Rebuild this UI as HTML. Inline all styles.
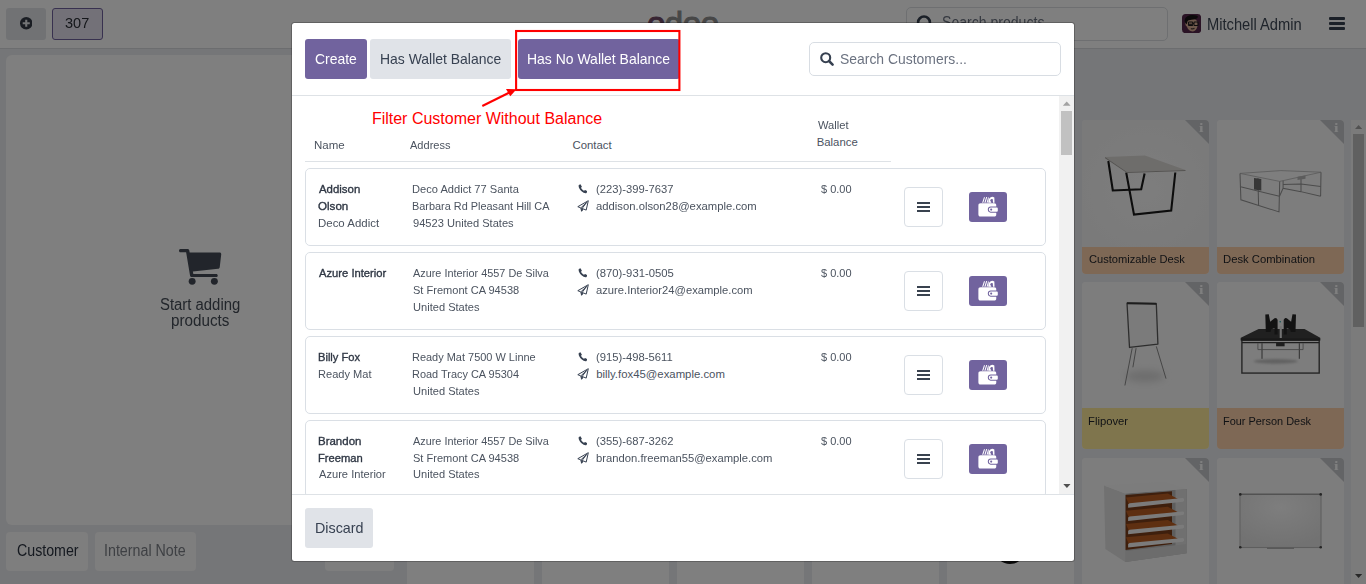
<!DOCTYPE html>
<html lang="en">
<head>
<meta charset="utf-8">
<title>Point of Sale - Customers</title>
<style>
*{box-sizing:border-box;margin:0;padding:0}
html,body{width:1366px;height:584px;overflow:hidden}
body{font-family:"Liberation Sans",Arial,sans-serif;font-size:14px;color:#374151;background:#f3f4f6;position:relative}
.abs{position:absolute}
.t{position:absolute;white-space:nowrap;line-height:1;transform-origin:0 0}
#app{position:absolute;left:0;top:0;width:1366px;height:584px;background:#ebedf0;overflow:hidden}
#hdr{position:absolute;left:0;top:0;width:1366px;height:49px;background:#fff;border-bottom:1px solid #d9dbdf}
.hbtn{position:absolute;top:8px;height:32px;border-radius:3px;background:#e3e5e9}
#leftpane{position:absolute;left:6px;top:55px;width:388px;height:470px;background:#fefefe;border-radius:6px}
.lbtn{position:absolute;top:532px;height:39px;border-radius:4px;background:#fcfcfc}
.card{position:absolute;width:127px;border-radius:4px;overflow:hidden;background:#fff}
.card .lbl{position:absolute;left:0;top:127px;width:127px}
.tri{position:absolute;right:0;top:0;width:0;height:0;border-top:24.500px solid #c6c8cc;border-left:24.500px solid transparent}
#ovl{position:absolute;left:0;top:0;width:1366px;height:584px;background:rgba(0,0,0,.5)}
#modal{position:absolute;left:292px;top:23px;width:782px;height:538px;background:#fff;border-radius:2.500px;overflow:hidden;box-shadow:0 0 0 1px rgba(0,0,0,.23)}
.btn{position:absolute;border-radius:3px;height:40px;top:16px}
.pri{background:#71639e;color:#fff}
.sec{background:#e0e3e8;color:#374151}
.row{position:absolute;left:13px;width:741px;height:78px;border:1px solid #dadfe5;border-radius:5px;background:#fff;color:#414a57}
.kebab{position:absolute;left:598px;top:18px;width:39px;height:40px;border:1px solid #dadfe5;border-radius:4px;background:#fff}
.kebab span{position:absolute;left:12px;width:13px;height:2px;background:#39424f}
.wbtn{position:absolute;left:663px;top:23px;width:38px;height:30px;border-radius:3px;background:#71639e}
</style>
</head>
<body>
<div id="app"><div id="hdr"><div class="hbtn" style="left:6px;width:40px"></div><div class="hbtn" style="left:52px;width:51px;background:#e6e2f0;border:1px solid #71639e"></div><span class="t" style="left:65.33px;top:15px;font-size:15.4px;transform:scaleX(0.943);color:#2b2f36">307</span><svg class="abs" style="left:19.700px;top:17px" width="12.500" height="12.500" viewBox="0 0 12 12"><circle cx="6" cy="6" r="6" fill="#343b47"/><path d="M6 2.600v6.800M2.600 6h6.800" stroke="#e7e9ed" stroke-width="2"/></svg><span class="t" style="left:646.900px;top:7.100px;font-size:33px;letter-spacing:-.4px;color:#8f8f8f;-webkit-text-stroke:1px #8f8f8f"><span style="color:#714b67;-webkit-text-stroke-color:#714b67">o</span>doo</span><div class="abs" style="left:906px;top:7px;width:262px;height:34px;border:1px solid #dcdfe3;border-radius:5px;background:#fff"></div><svg class="abs" style="left:915px;top:14px" width="20" height="20" viewBox="915 14 20 20"><circle cx="924" cy="22.400" r="5.900" fill="none" stroke="#374151" stroke-width="2.600"/><path d="M928.500 27L932.500 31" stroke="#374151" stroke-width="3" stroke-linecap="round"/></svg><span class="t" style="left:942.24px;top:15px;font-size:16px;transform:scaleX(0.879);color:#6b7280">Search products...</span><svg class="abs" style="left:1182px;top:13.800px" width="19.200" height="19.200" viewBox="0 0 19 19">
<rect width="19" height="19" rx="3.600" fill="#54264a"/>
<path d="M3.300 8.500C3.300 5.800 5.500 4.600 9 4.600S15.600 5.800 15.600 9.500C15.600 13.500 13.800 17.400 10.500 17.400 7.500 17.400 5.800 15.500 4.800 12.500 3.600 12.300 3.300 10.500 3.300 8.500z" fill="#dcb096"/>
<path d="M2.600 6.200C3.400 2.200 7 .8 10.500.9 13.500 1 15.800 1.700 15.900 2.800 15 5 12.500 5.700 9.500 5.800 7.600 5.900 6.300 6.300 5.500 7.200L4.700 10.200C3.300 9.500 2.400 7.800 2.600 6.200z" fill="#161214"/>
<g fill="none" stroke="#1d1a1c" stroke-width="1"><rect x="6.400" y="8" width="4.200" height="3.400" rx=".6"/><rect x="11.900" y="8" width="4" height="3.400" rx=".6"/><path d="M10.600 9.300H11.900"/></g>
<path d="M6.700 10.200H10.300" stroke="#2a2426" stroke-width="1.200"/>
<path d="M8.800 14.300Q10.500 15.200 12.400 14.200" stroke="#4a3a36" stroke-width="1.100" fill="none"/></svg><span class="t" style="left:1207.15px;top:17px;font-size:16px;transform:scaleX(0.918);color:#3f4957">Mitchell Admin</span><div class="abs" style="left:1329px;top:17px;width:16px;height:2.800px;background:#374151;border-radius:1px"></div><div class="abs" style="left:1329px;top:22px;width:16px;height:2.800px;background:#374151;border-radius:1px"></div><div class="abs" style="left:1329px;top:27px;width:16px;height:2.800px;background:#374151;border-radius:1px"></div></div><div id="leftpane"></div><svg class="abs" style="left:179px;top:248.500px" width="42.500" height="36" viewBox="0 0 43 37" preserveAspectRatio="none"><g fill="#444b56">
<path d="M1.500 0H8.600C9.600 0 10.200.6 10.400 1.500L10.800 3.700H41C42.200 3.700 42.900 4.600 42.700 5.700L41.200 18.700C41.100 19.600 40.400 20.200 39.500 20.300L14 23 14.500 25.600H37.500C38.600 25.600 39.200 26.300 39.200 27.200S38.600 28.900 37.500 28.900H13C12 28.900 11.400 28.300 11.200 27.400L7.200 3.300H1.500C.5 3.300 0 2.600 0 1.700S.5 0 1.500 0z"/>
<circle cx="13.300" cy="33.200" r="3.500"/><circle cx="35.800" cy="33.200" r="3.500"/></g></svg><span class="t" style="left:159.90px;top:297px;font-size:16px;transform:scaleX(0.930);color:#454c57">Start adding</span><span class="t" style="left:170.75px;top:313px;font-size:16px;transform:scaleX(0.951);color:#454c57">products</span><div class="lbtn" style="left:6px;width:82px"></div><div class="lbtn" style="left:95px;width:101px"></div><span class="t" style="left:16.73px;top:543px;font-size:16px;transform:scaleX(0.888);color:#2b3340">Customer</span><span class="t" style="left:104.46px;top:543px;font-size:16px;transform:scaleX(0.891);color:#7d8188">Internal Note</span><div class="abs" style="left:325px;top:531px;width:69px;height:40px;border-radius:4px;background:#fdfdfd"></div><div class="card" style="left:1082px;top:120px;height:154px"><svg class="abs" style="left:0;top:0" width="127" height="127" viewBox="0 0 127 127" preserveAspectRatio="none"><defs><radialGradient id="g1" cx=".5" cy=".55" r=".6"><stop offset="0" stop-color="#fbfbfb"/><stop offset="1" stop-color="#f4f4f4"/></radialGradient></defs>
<rect width="127" height="127" fill="url(#g1)"/>
<g fill="none" stroke="#1a1a1a" stroke-width="2.100" stroke-linejoin="miter">
<path d="M26.300 41L30.800 70.500 59.200 69.300 62.600 53.500"/>
<path d="M44.200 52.500L52 94.600 89.200 90.600 93.300 52.500"/></g>
<path d="M23.100 37.100L62.900 35.500 103.500 49.900 45 51.900z" fill="#dddad6"/>
<path d="M23.100 37.100L45 51.900 103.500 49.900 103.500 51.100 45 53.100 23.100 38.300z" fill="#a9a6a2"/></svg><div class="tri"></div><span class="t" style="left:117.40px;top:1px;font-size:13.5px;transform:scaleX(1.200);font-weight:bold;color:#fff;font-family:'Liberation Serif',serif">i</span><div class="lbl" style="top:127px;height:27px;background:#fdd0aa"></div><span class="t" style="left:6.51px;top:134px;font-size:11.375px;transform:scaleX(0.979);color:#1f2329">Customizable Desk</span></div><div class="card" style="left:1217px;top:120px;height:154px"><svg class="abs" style="left:0;top:0" width="127" height="127" viewBox="0 0 127 127" preserveAspectRatio="none"><rect width="127" height="127" fill="#fafafa"/>
<path d="M23 53.400L63.900 50.600 104 52.200 62.700 61.400z" fill="#fdfdfd" stroke="#b4b4b4" stroke-width=".8"/>
<g fill="none" stroke="#979797" stroke-width="1.050">
<path d="M23 53.400L23.900 79.800 62 91.900 62.700 61.400"/>
<path d="M23.500 66.700L62.500 76.300M40.900 58L41.600 85.500"/>
<path d="M104 52.200L103.600 76.300M84 57.500V71.700L103.600 76.300M66.100 60.700V68.300L84 71.700M62.500 76.300L66.100 68.300"/>
<path d="M84 64L103.800 66.500M66.100 64.500L84 64"/>
</g>
<path d="M37 58L44.300 59.100 44.300 70.600 37 69.400z" fill="#6e6e6e"/>
<path d="M80.500 56.800L88.500 55.600 88.500 58.800 80.500 60z" fill="#b8b8b8"/></svg><div class="tri"></div><span class="t" style="left:117.40px;top:1px;font-size:13.5px;transform:scaleX(1.200);font-weight:bold;color:#fff;font-family:'Liberation Serif',serif">i</span><div class="lbl" style="top:127px;height:27px;background:#fdd0aa"></div><span class="t" style="left:6.01px;top:134px;font-size:11.375px;transform:scaleX(0.992);color:#1f2329">Desk Combination</span></div><div class="card" style="left:1082px;top:282px;height:167px"><svg class="abs" style="left:0;top:0" width="127" height="126" viewBox="0 0 127 127" preserveAspectRatio="none"><defs><filter id="b3" x="-30%" y="-60%" width="160%" height="220%"><feGaussianBlur stdDeviation="3.500"/></filter></defs>
<rect width="127" height="127" fill="#fafafa"/>
<ellipse cx="63" cy="95" rx="19" ry="6" fill="#dcdcdc" filter="url(#b3)"/>
<g stroke="#8a8a8a" stroke-width="1" fill="none"><path d="M50.200 66.700L42.900 104.300M54.100 66.700L50.900 86M74.300 64.900L84 97.400"/></g>
<path d="M45 21.200L74.300 21.700 75.900 62.600 47.500 66z" fill="#f6f6f6" stroke="#5a5a5a" stroke-width="1.300" stroke-linejoin="round"/>
<path d="M45 21.500L74.300 22" stroke="#3a3a3a" stroke-width="2"/></svg><div class="tri"></div><span class="t" style="left:117.40px;top:1px;font-size:13.5px;transform:scaleX(1.200);font-weight:bold;color:#fff;font-family:'Liberation Serif',serif">i</span><div class="lbl" style="top:126px;height:41px;background:#ffeb9b"></div><span class="t" style="left:6.01px;top:134px;font-size:11.375px;transform:scaleX(0.991);color:#1f2329">Flipover</span></div><div class="card" style="left:1217px;top:282px;height:167px"><svg class="abs" style="left:0;top:0" width="127" height="126" viewBox="0 0 127 127" preserveAspectRatio="none"><defs><filter id="b4" x="-20%" y="-150%" width="140%" height="400%"><feGaussianBlur stdDeviation="1.300"/></filter></defs>
<rect width="127" height="127" fill="#fafafa"/>
<ellipse cx="58.700" cy="80" rx="22" ry="2.400" fill="#c4c4c4" filter="url(#b4)"/>
<g fill="none">
<rect x="24.900" y="58.500" width="77.300" height="33.300" stroke="#4a4a4a" stroke-width="1.400"/>
<path d="M24.900 61.100H102.200" stroke="#3c3c3c" stroke-width="1.300"/>
<path d="M45 61.700V77.400M82.300 61.700V77.400" stroke-width="1" stroke="#5a5a5a"/>
<path d="M40.900 61.700V68.100H86.100V61.700" stroke-width=".8" stroke="#858585"/>
</g>
<rect x="59.100" y="61.500" width="8.500" height="3.300" fill="#3a3a3a"/>
<path d="M23.800 56.200L41.600 47.300 87.500 47.300 103.200 56.200 103.200 58.900 23.800 58.900z" fill="#404040"/>
<path d="M23.800 56.600H103.200V58.900H23.800z" fill="#333"/>
<path d="M48.300 32.800L51.800 32.500 53.200 40 57.500 36.500 59.200 36.300 60.600 38V53H57.500V46.500L54.200 47.500 53.500 50.500H48.800z" fill="#262626"/>
<path d="M79 32.800L75.500 32.500 74.100 40 69.800 36.500 68.100 36.300 66.700 38V53H69.800V46.500L73.100 47.500 73.800 50.500H78.500z" fill="#262626"/>
<path d="M62.700 44.500H64.800V56.400H62.700z" fill="#e6e6e6"/>
<circle cx="63.200" cy="40" r=".8" fill="#2aa"/></svg><div class="tri"></div><span class="t" style="left:117.40px;top:1px;font-size:13.5px;transform:scaleX(1.200);font-weight:bold;color:#fff;font-family:'Liberation Serif',serif">i</span><div class="lbl" style="top:126px;height:41px;background:#fdd0aa"></div><span class="t" style="left:6.04px;top:134px;font-size:11.375px;transform:scaleX(0.962);color:#1f2329">Four Person Desk</span></div><div class="card" style="left:407px;top:458px;height:167px"></div><div class="card" style="left:542px;top:458px;height:167px"></div><div class="card" style="left:677px;top:458px;height:167px"></div><div class="card" style="left:812px;top:458px;height:167px"></div><div class="card" style="left:947px;top:458px;height:167px"></div><div class="abs" style="left:996px;top:540px;width:28px;height:23.500px;border-radius:50%;background:#111"></div><div class="card" style="left:1082px;top:458px;height:167px"><svg class="abs" style="left:0;top:0" width="127" height="127" viewBox="0 0 127 127" preserveAspectRatio="none"><rect width="127" height="127" fill="#fafafa"/><path d="M43.300 35.600L104.600 31 104.600 95.300 43.300 104z" fill="#bdbdbd"/><path d="M43.300 37L90 33.300 90 86 43.300 92z" fill="#7d3f1a"/><path d="M93.500 32L104.600 31 104.600 95.300 93.500 93z" fill="#e0e0e0"/><path d="M44.0 39.4 85.8 35.5 96.0 40.9 46.8 46.1 z" fill="#bd5e22"/><path d="M46.1 46.2 47.6 45.2 100.8 40.1 102.0 40.8 102.0 42.9 100.8 43.8 46.1 49.7 z" fill="#f7f7f7"/><path d="M44.0 52.7 85.8 48.8 96.0 54.2 46.8 59.4 z" fill="#bd5e22"/><path d="M46.1 59.5 47.6 58.5 100.8 53.4 102.0 54.1 102.0 56.2 100.8 57.1 46.1 63.0 z" fill="#f7f7f7"/><path d="M44.0 66.0 85.8 62.1 96.0 67.5 46.8 72.7 z" fill="#bd5e22"/><path d="M46.1 72.8 47.6 71.8 100.8 66.7 102.0 67.4 102.0 69.5 100.8 70.4 46.1 76.3 z" fill="#f7f7f7"/><path d="M44.0 79.3 85.8 75.4 96.0 80.8 46.8 86.0 z" fill="#bd5e22"/><path d="M46.1 86.1 47.6 85.1 100.8 80.0 102.0 80.7 102.0 82.8 100.8 83.7 46.1 89.6 z" fill="#f7f7f7"/><path d="M43.300 93L104.600 86 104.600 95.300 43.300 104z" fill="#d9d9d9"/><path d="M22 27.600L43.300 35.600 43.300 104 23.400 91.100z" fill="#e2e2e2"/><path d="M22 27.600L82.400 24.100 104.600 31 43.300 35.600z" fill="#f8f8f8"/></svg><div class="tri"></div><span class="t" style="left:117.40px;top:1px;font-size:13.5px;transform:scaleX(1.200);font-weight:bold;color:#fff;font-family:'Liberation Serif',serif">i</span><div class="lbl" style="top:127px;height:40px;background:#fdd0aa"></div></div><div class="card" style="left:1217px;top:458px;height:167px"><svg class="abs" style="left:0;top:0" width="127" height="127" viewBox="0 0 127 127" preserveAspectRatio="none"><defs><radialGradient id="g7" cx=".5" cy=".25" r=".75"><stop offset="0" stop-color="#fcfcfc"/><stop offset="1" stop-color="#e4e4e4"/></radialGradient></defs>
<rect width="127" height="127" fill="#fafafa"/>
<rect x="23" y="36.100" width="81" height="53.400" fill="url(#g7)" stroke="#bdbdbd" stroke-width="1.100"/>
<path d="M23 36.300H104" stroke="#a5a5a5" stroke-width="1.300"/>
<path d="M50 90.300H77" stroke="#a0a0a0" stroke-width="1"/>
<g fill="#4a4a4a"><circle cx="23.300" cy="36.400" r="1.300"/><circle cx="103.700" cy="36.400" r="1.300"/><circle cx="23.300" cy="89.300" r="1.300"/><circle cx="103.700" cy="89.300" r="1.300"/></g></svg><div class="tri"></div><span class="t" style="left:117.40px;top:1px;font-size:13.5px;transform:scaleX(1.200);font-weight:bold;color:#fff;font-family:'Liberation Serif',serif">i</span><div class="lbl" style="top:127px;height:40px;background:#fdd0aa"></div></div><div class="abs" style="left:1351px;top:119.500px;width:15px;height:465px;background:#f7f7f7"></div><div class="abs" style="left:1353px;top:134.300px;width:11px;height:193px;background:#c1c1c1"></div><svg class="abs" style="left:1351px;top:119px" width="15" height="465" viewBox="0 0 15 465"><path d="M4 10L7.600 6 11.200 10z" fill="#a3a3a3"/><path d="M4 455L7.600 459 11.200 455z" fill="#505050"/></svg></div>
<div id="ovl"></div>
<div id="modal"><div class="btn pri" style="left:13px;width:62px"></div><div class="btn sec" style="left:78px;width:141px"></div><div class="btn pri" style="left:226px;width:162px"></div><span class="t" style="left:23.00px;top:28px;font-size:15px;transform:scaleX(0.929);color:#fff">Create</span><span class="t" style="left:87.64px;top:28px;font-size:15px;transform:scaleX(0.930);color:#374151">Has Wallet Balance</span><span class="t" style="left:235.24px;top:28px;font-size:15px;transform:scaleX(0.931);color:#fff">Has No Wallet Balance</span><div class="abs" style="left:517px;top:19px;width:252px;height:34px;border:1px solid #d8dde3;border-radius:5px;background:#fff"></div><svg class="abs" style="left:527.500px;top:29.400px" width="14" height="14" viewBox="0 0 14 14"><circle cx="5.700" cy="5.700" r="4.500" fill="none" stroke="#374151" stroke-width="2.100"/><path d="M9 9L12.600 12.600" stroke="#374151" stroke-width="2.500" stroke-linecap="round"/></svg><span class="t" style="left:548.20px;top:28px;font-size:15px;transform:scaleX(0.928);color:#6b7280">Search Customers...</span><div class="abs" style="left:0;top:72px;width:782px;height:1px;background:#dee2e6"></div><div class="abs" style="left:0;top:73px;width:782px;height:398px;overflow:hidden"><span class="t" style="left:21.89px;top:44px;font-size:11.375px;transform:scaleX(1.012);color:#4b535f">Name</span><span class="t" style="left:118.00px;top:44px;font-size:11.375px;transform:scaleX(0.972);color:#4b535f">Address</span><span class="t" style="left:280.50px;top:44px;font-size:11.375px;color:#4b535f">Contact</span><span class="t" style="left:525.70px;top:24px;font-size:11.375px;transform:scaleX(0.981);color:#4b535f">Wallet</span><span class="t" style="left:524.70px;top:41px;font-size:11.375px;color:#4b535f">Balance</span><div class="abs" style="left:13px;top:65px;width:586px;height:1px;background:#dee2e6"></div><div class="row" style="top:72px"><span class="t" style="left:12.70px;top:15px;font-size:11.375px;transform:scaleX(1.006);-webkit-text-stroke:0.35px;color:#2f3744">Addison</span><span class="t" style="left:12.19px;top:32px;font-size:11.375px;transform:scaleX(1.021);-webkit-text-stroke:0.35px;color:#2f3744">Olson</span><span class="t" style="left:11.69px;top:49px;font-size:11.375px;transform:scaleX(1.008);color:#4b535f">Deco Addict</span><span class="t" style="left:106.42px;top:15px;font-size:11.375px;transform:scaleX(0.978);color:#4b535f">Deco Addict 77 Santa</span><span class="t" style="left:106.44px;top:32px;font-size:11.375px;transform:scaleX(0.959);color:#4b535f">Barbara Rd Pleasant Hill CA</span><span class="t" style="left:106.91px;top:49px;font-size:11.375px;transform:scaleX(0.978);color:#4b535f">94523 United States</span><svg class="abs" style="left:271.800px;top:15.2px" width="9.500" height="9.500" viewBox="0 0 10 10"><path d="M2.600.3L.9 1C.1 2.700 1.300 5.600 3.700 7.700 5.800 9.500 7.800 10 9 9.400L9.800 7.600 7.500 6.200 6.300 7.100C5.100 6.500 3.800 5.200 3.200 3.900L4.100 2.800z" fill="#374151"/></svg><span class="t" style="left:290.16px;top:15px;font-size:11.375px;transform:scaleX(0.988);color:#4b535f">(223)-399-7637</span><svg class="abs" style="left:271.400px;top:31.0px" width="12" height="12" viewBox="0 0 12 12"><path d="M11.300.7L.8 6.700 3.800 7.900 4.600 11.300 6.300 8.900 9.200 10.100zM9.700 2.400L4.200 7.500M4.600 10.800L5.300 8.200 9.700 2.400" fill="none" stroke="#374151" stroke-width="1" stroke-linejoin="round"/><path d="M4.100 7.600L4.700 11 6.300 8.700z" fill="#374151"/></svg><span class="t" style="left:290.40px;top:32px;font-size:11.375px;transform:scaleX(0.993);color:#4b535f">addison.olson28@example.com</span><span class="t" style="left:514.86px;top:15px;font-size:11.375px;transform:scaleX(0.968);color:#4b535f">$ 0.00</span><div class="kebab"><span style="top:14px"></span><span style="top:18px"></span><span style="top:22px"></span></div><div class="wbtn"><svg class="abs" style="left:8.500px;top:4.100px" width="20.200" height="21" viewBox="0 0 21 21" preserveAspectRatio="none"><g fill="#fff"><path d="M4.300 6.700L6.200 1.300 7.300 1.300 5.500 6.700zM6.600 6.700L8.500.9 9.600.9 7.800 6.700zM8.900 6.700L10.500 1.500 11.400 1.500 10 6.700z"/><path d="M11 3.600Q13.400-.6 17 1.500L17.200 6.700 15.600 6.700 15.400 3.300Q13.600 2.500 12.600 4.400L14 6.700 10.600 6.700z"/><path d="M2.800 7.300H16.700C18.400 7.300 19 8 19 9.500V10.500H13.200C11.300 10.500 10.200 11.800 10.200 13.600S11.300 16.700 13.200 16.700H19V18.400C19 19.800 18.300 20.600 16.700 20.600H2.800C1.100 20.600.4 19.900.4 18.200V9.700C.4 8 1.100 7.300 2.800 7.300z"/><path d="M13.400 11.500H19.700C20.200 11.500 20.600 11.900 20.600 12.400V14.800C20.600 15.300 20.200 15.700 19.700 15.700H13.400C12.100 15.700 11.300 14.800 11.300 13.600S12.100 11.500 13.400 11.500zM13.700 12.500A1.100 1.100 0 1 0 13.700 14.700 1.100 1.100 0 1 0 13.700 12.500z" fill-rule="evenodd"/></g></svg></div></div><div class="row" style="top:156px"><span class="t" style="left:12.70px;top:15px;font-size:11.375px;transform:scaleX(0.987);-webkit-text-stroke:0.35px;color:#2f3744">Azure Interior</span><span class="t" style="left:107.40px;top:15px;font-size:11.375px;transform:scaleX(0.956);color:#4b535f">Azure Interior 4557 De Silva</span><span class="t" style="left:106.91px;top:32px;font-size:11.375px;transform:scaleX(0.972);color:#4b535f">St Fremont CA 94538</span><span class="t" style="left:106.67px;top:49px;font-size:11.375px;transform:scaleX(0.976);color:#4b535f">United States</span><svg class="abs" style="left:271.800px;top:15.2px" width="9.500" height="9.500" viewBox="0 0 10 10"><path d="M2.600.3L.9 1C.1 2.700 1.300 5.600 3.700 7.700 5.800 9.500 7.800 10 9 9.400L9.800 7.600 7.500 6.200 6.300 7.100C5.100 6.500 3.800 5.200 3.200 3.900L4.100 2.800z" fill="#374151"/></svg><span class="t" style="left:290.15px;top:15px;font-size:11.375px;transform:scaleX(0.994);color:#4b535f">(870)-931-0505</span><svg class="abs" style="left:271.400px;top:31.0px" width="12" height="12" viewBox="0 0 12 12"><path d="M11.300.7L.8 6.700 3.800 7.900 4.600 11.300 6.300 8.900 9.200 10.100zM9.700 2.400L4.200 7.500M4.600 10.800L5.300 8.200 9.700 2.400" fill="none" stroke="#374151" stroke-width="1" stroke-linejoin="round"/><path d="M4.100 7.600L4.700 11 6.300 8.700z" fill="#374151"/></svg><span class="t" style="left:290.41px;top:32px;font-size:11.375px;transform:scaleX(0.987);color:#4b535f">azure.Interior24@example.com</span><span class="t" style="left:514.86px;top:15px;font-size:11.375px;transform:scaleX(0.968);color:#4b535f">$ 0.00</span><div class="kebab"><span style="top:14px"></span><span style="top:18px"></span><span style="top:22px"></span></div><div class="wbtn"><svg class="abs" style="left:8.500px;top:4.100px" width="20.200" height="21" viewBox="0 0 21 21" preserveAspectRatio="none"><g fill="#fff"><path d="M4.300 6.700L6.200 1.300 7.300 1.300 5.500 6.700zM6.600 6.700L8.500.9 9.600.9 7.800 6.700zM8.900 6.700L10.500 1.500 11.400 1.500 10 6.700z"/><path d="M11 3.600Q13.400-.6 17 1.500L17.200 6.700 15.600 6.700 15.400 3.300Q13.600 2.500 12.600 4.400L14 6.700 10.600 6.700z"/><path d="M2.800 7.300H16.700C18.400 7.300 19 8 19 9.500V10.500H13.200C11.300 10.500 10.200 11.800 10.200 13.600S11.300 16.700 13.200 16.700H19V18.400C19 19.800 18.300 20.600 16.700 20.600H2.800C1.100 20.600.4 19.900.4 18.200V9.700C.4 8 1.100 7.300 2.800 7.300z"/><path d="M13.400 11.500H19.700C20.200 11.500 20.600 11.900 20.600 12.400V14.800C20.600 15.300 20.200 15.700 19.700 15.700H13.400C12.100 15.700 11.300 14.800 11.300 13.600S12.100 11.500 13.400 11.500zM13.700 12.500A1.100 1.100 0 1 0 13.700 14.700 1.100 1.100 0 1 0 13.700 12.500z" fill-rule="evenodd"/></g></svg></div></div><div class="row" style="top:240px"><span class="t" style="left:11.72px;top:15px;font-size:11.375px;transform:scaleX(0.980);-webkit-text-stroke:0.35px;color:#2f3744">Billy Fox</span><span class="t" style="left:11.72px;top:32px;font-size:11.375px;transform:scaleX(0.975);color:#4b535f">Ready Mat</span><span class="t" style="left:106.44px;top:15px;font-size:11.375px;transform:scaleX(0.965);color:#4b535f">Ready Mat 7500 W Linne</span><span class="t" style="left:106.44px;top:32px;font-size:11.375px;transform:scaleX(0.963);color:#4b535f">Road Tracy CA 95304</span><span class="t" style="left:106.67px;top:49px;font-size:11.375px;transform:scaleX(0.976);color:#4b535f">United States</span><svg class="abs" style="left:271.800px;top:15.2px" width="9.500" height="9.500" viewBox="0 0 10 10"><path d="M2.600.3L.9 1C.1 2.700 1.300 5.600 3.700 7.700 5.800 9.500 7.800 10 9 9.400L9.800 7.600 7.500 6.200 6.300 7.100C5.100 6.500 3.800 5.200 3.200 3.900L4.100 2.800z" fill="#374151"/></svg><span class="t" style="left:290.16px;top:15px;font-size:11.375px;transform:scaleX(0.990);color:#4b535f">(915)-498-5611</span><svg class="abs" style="left:271.400px;top:31.0px" width="12" height="12" viewBox="0 0 12 12"><path d="M11.300.7L.8 6.700 3.800 7.900 4.600 11.300 6.300 8.900 9.200 10.100zM9.700 2.400L4.200 7.500M4.600 10.800L5.300 8.200 9.700 2.400" fill="none" stroke="#374151" stroke-width="1" stroke-linejoin="round"/><path d="M4.100 7.600L4.700 11 6.300 8.700z" fill="#374151"/></svg><span class="t" style="left:290.15px;top:32px;font-size:11.375px;color:#4b535f">billy.fox45@example.com</span><span class="t" style="left:514.86px;top:15px;font-size:11.375px;transform:scaleX(0.968);color:#4b535f">$ 0.00</span><div class="kebab"><span style="top:14px"></span><span style="top:18px"></span><span style="top:22px"></span></div><div class="wbtn"><svg class="abs" style="left:8.500px;top:4.100px" width="20.200" height="21" viewBox="0 0 21 21" preserveAspectRatio="none"><g fill="#fff"><path d="M4.300 6.700L6.200 1.300 7.300 1.300 5.500 6.700zM6.600 6.700L8.500.9 9.600.9 7.800 6.700zM8.900 6.700L10.500 1.500 11.400 1.500 10 6.700z"/><path d="M11 3.600Q13.400-.6 17 1.500L17.200 6.700 15.600 6.700 15.400 3.300Q13.600 2.500 12.600 4.400L14 6.700 10.600 6.700z"/><path d="M2.800 7.300H16.700C18.400 7.300 19 8 19 9.500V10.500H13.200C11.300 10.500 10.200 11.800 10.200 13.600S11.300 16.700 13.200 16.700H19V18.400C19 19.800 18.300 20.600 16.700 20.600H2.800C1.100 20.600.4 19.900.4 18.200V9.700C.4 8 1.100 7.300 2.800 7.300z"/><path d="M13.400 11.500H19.700C20.200 11.500 20.600 11.900 20.600 12.400V14.800C20.600 15.300 20.200 15.700 19.700 15.700H13.400C12.100 15.700 11.300 14.800 11.300 13.600S12.100 11.500 13.400 11.500zM13.700 12.500A1.100 1.100 0 1 0 13.700 14.700 1.100 1.100 0 1 0 13.700 12.500z" fill-rule="evenodd"/></g></svg></div></div><div class="row" style="top:324px"><span class="t" style="left:11.69px;top:15px;font-size:11.375px;transform:scaleX(1.011);-webkit-text-stroke:0.35px;color:#2f3744">Brandon</span><span class="t" style="left:11.71px;top:32px;font-size:11.375px;transform:scaleX(0.985);-webkit-text-stroke:0.35px;color:#2f3744">Freeman</span><span class="t" style="left:12.70px;top:48px;font-size:11.375px;transform:scaleX(0.979);color:#4b535f">Azure Interior</span><span class="t" style="left:107.40px;top:15px;font-size:11.375px;transform:scaleX(0.956);color:#4b535f">Azure Interior 4557 De Silva</span><span class="t" style="left:106.91px;top:32px;font-size:11.375px;transform:scaleX(0.972);color:#4b535f">St Fremont CA 94538</span><span class="t" style="left:106.67px;top:48px;font-size:11.375px;transform:scaleX(0.976);color:#4b535f">United States</span><svg class="abs" style="left:271.800px;top:15.2px" width="9.500" height="9.500" viewBox="0 0 10 10"><path d="M2.600.3L.9 1C.1 2.700 1.300 5.600 3.700 7.700 5.800 9.500 7.800 10 9 9.400L9.800 7.600 7.500 6.200 6.300 7.100C5.100 6.500 3.800 5.200 3.200 3.900L4.100 2.800z" fill="#374151"/></svg><span class="t" style="left:290.16px;top:15px;font-size:11.375px;transform:scaleX(0.988);color:#4b535f">(355)-687-3262</span><svg class="abs" style="left:271.400px;top:31.0px" width="12" height="12" viewBox="0 0 12 12"><path d="M11.300.7L.8 6.700 3.800 7.900 4.600 11.300 6.300 8.900 9.200 10.100zM9.700 2.400L4.200 7.500M4.600 10.800L5.300 8.200 9.700 2.400" fill="none" stroke="#374151" stroke-width="1" stroke-linejoin="round"/><path d="M4.100 7.600L4.700 11 6.300 8.700z" fill="#374151"/></svg><span class="t" style="left:290.16px;top:32px;font-size:11.375px;transform:scaleX(0.990);color:#4b535f">brandon.freeman55@example.com</span><span class="t" style="left:514.86px;top:15px;font-size:11.375px;transform:scaleX(0.968);color:#4b535f">$ 0.00</span><div class="kebab"><span style="top:14px"></span><span style="top:18px"></span><span style="top:22px"></span></div><div class="wbtn"><svg class="abs" style="left:8.500px;top:4.100px" width="20.200" height="21" viewBox="0 0 21 21" preserveAspectRatio="none"><g fill="#fff"><path d="M4.300 6.700L6.200 1.300 7.300 1.300 5.500 6.700zM6.600 6.700L8.500.9 9.600.9 7.800 6.700zM8.900 6.700L10.500 1.500 11.400 1.500 10 6.700z"/><path d="M11 3.600Q13.400-.6 17 1.500L17.200 6.700 15.600 6.700 15.400 3.300Q13.600 2.500 12.600 4.400L14 6.700 10.600 6.700z"/><path d="M2.800 7.300H16.700C18.400 7.300 19 8 19 9.500V10.500H13.200C11.300 10.500 10.200 11.800 10.200 13.600S11.300 16.700 13.200 16.700H19V18.400C19 19.800 18.300 20.600 16.700 20.600H2.800C1.100 20.600.4 19.900.4 18.200V9.700C.4 8 1.100 7.300 2.800 7.300z"/><path d="M13.400 11.500H19.700C20.200 11.500 20.600 11.900 20.600 12.400V14.800C20.600 15.300 20.200 15.700 19.700 15.700H13.400C12.100 15.700 11.300 14.800 11.300 13.600S12.100 11.500 13.400 11.500zM13.700 12.500A1.100 1.100 0 1 0 13.700 14.700 1.100 1.100 0 1 0 13.700 12.500z" fill-rule="evenodd"/></g></svg></div></div><div class="abs" style="left:767px;top:0;width:15px;height:398px;background:#f1f1f1"></div><div class="abs" style="left:769px;top:15px;width:11px;height:44px;background:#c1c1c1"></div><svg class="abs" style="left:767px;top:0" width="15" height="398" viewBox="0 0 15 398"><path d="M3.800 9.800L7.700 5.600 11.600 9.800z" fill="#a3a3a3"/><path d="M4.300 388L7.900 392 11.500 388z" fill="#505050"/></svg></div><div class="abs" style="left:0;top:471px;width:782px;height:1px;background:#dee2e6"></div><div class="btn sec" style="left:13px;top:485px;width:68px"></div><span class="t" style="left:22.71px;top:497px;font-size:15px;transform:scaleX(0.955);color:#374151">Discard</span></div>
<svg class="abs" style="left:0;top:0" width="1366" height="584" viewBox="0 0 1366 584">
<rect x="516.100" y="31" width="163.300" height="59" fill="none" stroke="#ff0000" stroke-width="2.100"/>
<path d="M482.300 106L509 92.700" stroke="#ff0000" stroke-width="2.100" fill="none"/>
<path d="M516.500 89.300L506 89 510.300 96.300z" fill="#ff0000"/>
<text x="371.900" y="123.800" font-family="Liberation Sans, Arial, sans-serif" font-size="16" fill="#ff0000">Filter Customer Without Balance</text>
</svg>
</body>
</html>
